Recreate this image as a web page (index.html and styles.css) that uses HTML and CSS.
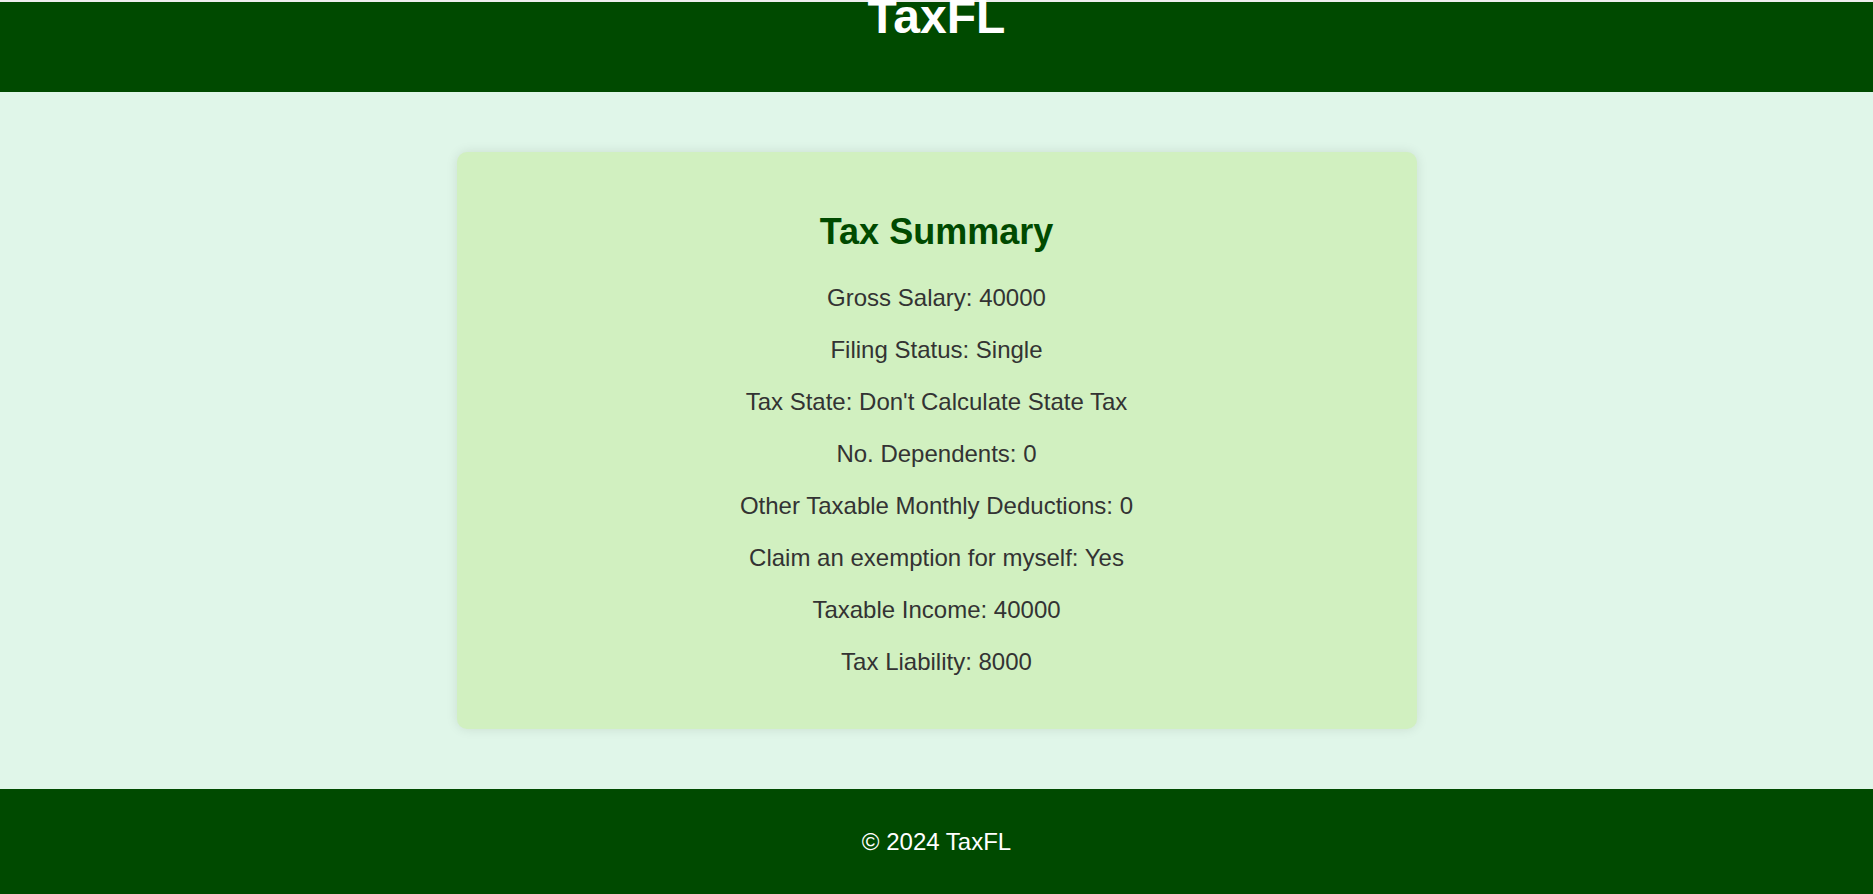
FILE: index.html
```html
<!DOCTYPE html>
<html lang="en">
<head>
<meta charset="utf-8">
<title>TaxFL</title>
<link rel="stylesheet" href="styles.css">
</head>
<body>
<header class="site-header">
  <h1 class="brand">TaxFL</h1>
</header>
<main class="main">
  <section class="card">
    <h2 class="card-title">Tax Summary</h2>
    <p class="row">Gross Salary: 40000</p>
    <p class="row">Filing Status: Single</p>
    <p class="row">Tax State: Don't Calculate State Tax</p>
    <p class="row">No. Dependents: 0</p>
    <p class="row">Other Taxable Monthly Deductions: 0</p>
    <p class="row">Claim an exemption for myself: Yes</p>
    <p class="row">Taxable Income: 40000</p>
    <p class="row">Tax Liability: 8000</p>
  </section>
</main>
<footer class="site-footer">
  <p class="copy">© 2024 TaxFL</p>
</footer>
</body>
</html>
```
FILE: styles.css
```css
html, body {
  margin: 0;
  padding: 0;
}
body {
  font-family: "Liberation Sans", Arial, sans-serif;
  background: #e0f6e9;
  color: #333;
}
.site-header {
  background: #004a00;
  border-top: 2px solid #eeeeee;
  height: 90px;
  text-align: center;
}
.brand {
  margin: -13px 0 0;
  font-size: 48px;
  font-weight: bold;
  color: #fff;
  line-height: normal;
}
.main {
  padding: 60px 0;
}
.card {
  width: 960px;
  box-sizing: border-box;
  margin: 0 auto;
  padding: 30px 20px 29px;
  background: #d1f0c0;
  border-radius: 10px;
  box-shadow: 0 0 12px rgba(0, 0, 0, 0.1);
  text-align: center;
}
.card-title {
  margin: 29px 0 31px;
  font-size: 36px;
  font-weight: bold;
  color: #004a00;
  line-height: normal;
}
.row {
  margin: 24px 0;
  font-size: 24px;
  line-height: normal;
}
.card-title + .row {
  margin-top: 0;
}
.site-footer {
  background: #004a00;
  padding: 39px 0 38px;
  text-align: center;
}
.copy {
  margin: 0;
  font-size: 24px;
  color: #fff;
  line-height: normal;
}
```
